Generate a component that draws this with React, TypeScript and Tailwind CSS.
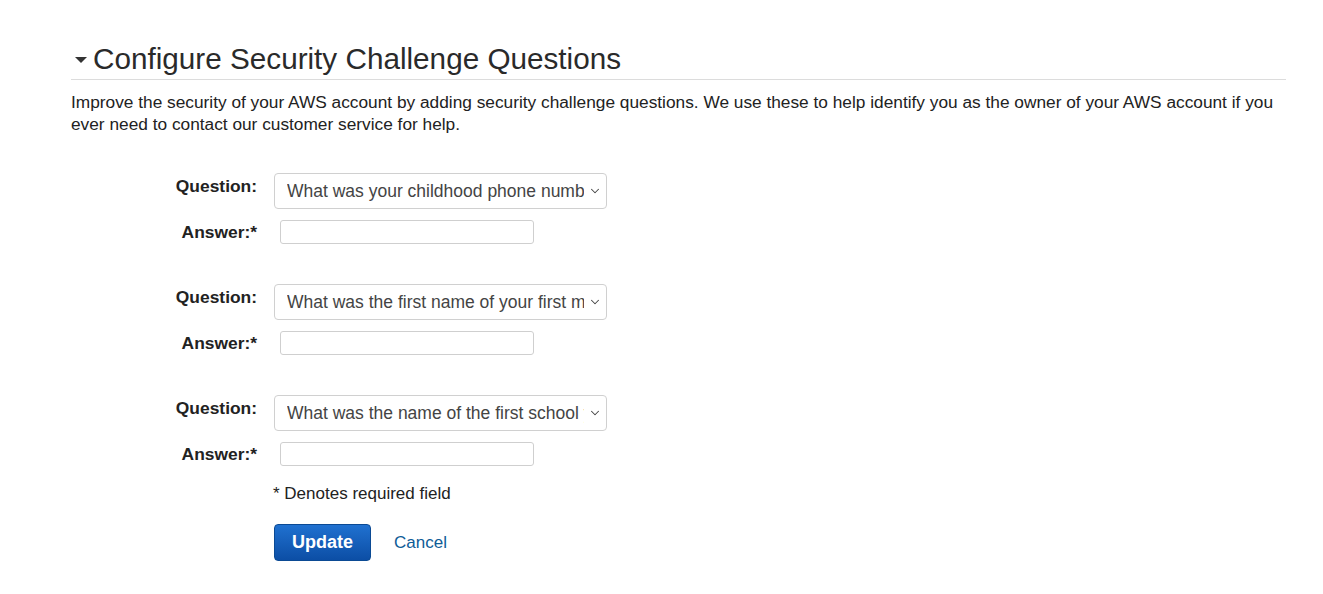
import { ChevronDown } from 'lucide-react';

const QUESTIONS = [
  'What was your childhood phone number including area code? (e.g., 000-000-0000)',
  'What was the first name of your first manager?',
  'What was the name of the first school you attended?',
];

function QuestionBlock({ question }: { question: string }) {
  return (
    <div className="grid grid-cols-[186px_1fr] gap-y-[11px] items-center">
      <label className="text-right font-bold text-[17.4px] leading-[22px] text-[#222] -mt-[10px]">Question:</label>
      <div className="pl-[17px]">
        <div className="relative w-[333px] h-[36px]">
          <select
            defaultValue={question}
            className="appearance-none w-full h-full border border-[#d0d0d0] rounded-[4px] bg-white pl-[12px] pr-[22px] text-[17.5px] text-[#444] outline-none font-['Liberation_Sans',Arial,sans-serif]"
          >
            {QUESTIONS.map((q) => (
              <option key={q} value={q}>{q}</option>
            ))}
          </select>
          <ChevronDown className="pointer-events-none absolute right-[5px] top-[11px] w-[14px] h-[14px] bg-white text-[#444]" strokeWidth={1.8} />
        </div>
      </div>
      <label className="text-right font-bold text-[17.4px] leading-[22px] text-[#222]">Answer:*</label>
      <div className="pl-[23px] h-[24px]">
        <input className="block w-[254px] h-[24px] border border-[#cfcfcf] rounded-[3px] bg-white outline-none" />
      </div>
    </div>
  );
}

export default function App() {
  return (
    <div className="w-[1323px] h-[594px] bg-white font-['Liberation_Sans',Arial,sans-serif] text-[#333] pl-[71px] pr-[37px] pt-[40px]">
      {/* Header */}
      <div className="flex items-center border-b border-[#dcdcdc] pb-[2px] pl-[4px]">
        <span className="inline-block w-0 h-0 border-l-[6px] border-r-[6px] border-t-[6px] border-l-transparent border-r-transparent border-t-[#333] mr-[6px] mt-[2px]" />
        <h2 className="text-[29.7px] leading-[37px] text-[#2a2a2a]">Configure Security Challenge Questions</h2>
      </div>
      <p className="text-[17.3px] leading-[22px] text-[#222] mt-[11px]">
        Improve the security of your AWS account by adding security challenge questions. We use these to help identify you as the owner of your AWS account if you ever need to contact our customer service for help.
      </p>

      {/* Form */}
      <div className="mt-[38px] flex flex-col gap-[40px]">
        {QUESTIONS.map((q) => (
          <QuestionBlock key={q} question={q} />
        ))}
      </div>
      <div className="pl-[202px] mt-[17px]">
        <p className="text-[17px] leading-[22px] text-[#222]">* Denotes required field</p>
        <div className="flex items-center mt-[19px] pl-[1px]">
          <button className="w-[97px] h-[37px] rounded-[4px] border border-[#0b4a94] bg-gradient-to-b from-[#2071d0] to-[#0c4ea5] text-white font-bold text-[18px]">
            Update
          </button>
          <a className="ml-[23px] text-[17px] text-[#0e5c97]">Cancel</a>
        </div>
      </div>
    </div>
  );
}
